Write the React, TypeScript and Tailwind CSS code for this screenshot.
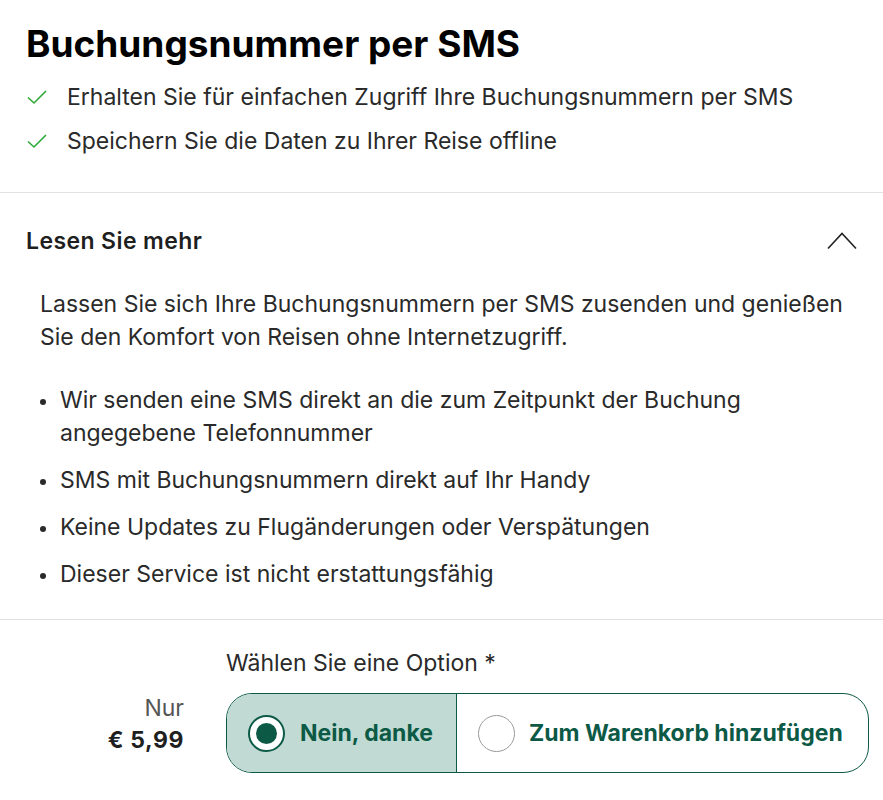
const font = { fontFamily: 'Inter, "Noto Sans", sans-serif' };

function Check() {
  return (
    <svg width="22" height="16" viewBox="0 0 22 16" className="shrink-0">
      <path d="M2 8.5 L8 14 L20 2" fill="none" stroke="#2ea836" strokeWidth="1.6" />
    </svg>
  );
}

function Chevron() {
  return (
    <svg width="30" height="18" viewBox="0 0 30 18" className="shrink-0">
      <path d="M1 16.5 L15 1.5 L29 16.5" fill="none" stroke="#222" strokeWidth="1.6" />
    </svg>
  );
}

function Radio({ checked }: { checked: boolean }) {
  return (
    <span
      className={
        checked
          ? 'flex h-[37px] w-[37px] shrink-0 items-center justify-center rounded-full border-2 border-[#0c5a46] bg-white'
          : 'flex h-[37px] w-[37px] shrink-0 items-center justify-center rounded-full border border-[#9a9a9a] bg-white'
      }
    >
      {checked && <span className="h-[21px] w-[21px] rounded-full bg-[#0c5a46]" />}
    </span>
  );
}

const bullets = [
  'Wir senden eine SMS direkt an die zum Zeitpunkt der Buchung angegebene Telefonnummer',
  'SMS mit Buchungsnummern direkt auf Ihr Handy',
  'Keine Updates zu Flugänderungen oder Verspätungen',
  'Dieser Service ist nicht erstattungsfähig',
];

export default function App() {
  return (
    <div className="h-[800px] w-[883px] overflow-hidden bg-white text-[#1f1f1f]" style={font}>
      <div className="px-[26px] pt-[24px] pb-[36px]">
        <h1 className="text-[37px] font-bold leading-[40px] text-black">Buchungsnummer per SMS</h1>
        <ul className="mt-[18px] flex flex-col gap-[14px]">
          <li className="flex items-center gap-[19px] text-[23px] leading-[30px] text-[#2a2a2a]">
            <Check />
            Erhalten Sie für einfachen Zugriff Ihre Buchungsnummern per SMS
          </li>
          <li className="flex items-center gap-[19px] text-[23px] leading-[30px] text-[#2a2a2a]">
            <Check />
            Speichern Sie die Daten zu Ihrer Reise offline
          </li>
        </ul>
      </div>
      <div className="border-t border-[#e2e2e2]" />
      <div className="flex h-[30px] items-center justify-between px-[26px] mt-[33px] mb-[32px] box-content">
        <span className="text-[23px] font-semibold leading-[30px] tracking-[0.4px] text-[#1f1f1f]">Lesen Sie mehr</span>
        <Chevron />
      </div>
      <div className="px-[40px] pb-[28px] text-[23px] leading-[33px] text-[#2a2a2a]">
        <p>
          Lassen Sie sich Ihre Buchungsnummern per SMS zusenden und genießen Sie den Komfort von Reisen ohne
          Internetzugriff.
        </p>
        <ul className="mt-[30px] flex flex-col gap-[14px]">
          {bullets.map((b) => (
            <li key={b} className="flex gap-[14px] pr-[80px]">
              <span className="mt-[15px] h-[6px] w-[6px] shrink-0 rounded-full bg-[#2a2a2a]" />
              <span>{b}</span>
            </li>
          ))}
        </ul>
      </div>
      <div className="border-t border-[#e2e2e2]" />
      <div className="flex pt-[29px]">
        <div className="flex w-[226px] flex-col items-end pr-[42px] pt-[43px] text-[23px] leading-[32px]">
          <span className="text-[#555]">Nur</span>
          <span className="font-bold tracking-[0.6px] text-[#1f1f1f]">€ 5,99</span>
        </div>
        <div className="flex flex-col">
          <span className="text-[23px] leading-[28px] text-[#2a2a2a]">Wählen Sie eine Option *</span>
          <div className="mt-[16px] flex h-[80px] w-[643px] overflow-hidden rounded-[26px] border border-[#0c5a46]">
            <div className="flex w-[230px] items-center gap-[15px] border-r border-[#0c5a46] bg-[#c1dad3] pl-[21px]">
              <Radio checked />
              <span className="text-[23px] font-bold text-[#0c5a46]">Nein, danke</span>
            </div>
            <div className="flex flex-1 items-center gap-[14px] pl-[21px]">
              <Radio checked={false} />
              <span className="text-[23px] font-bold text-[#0c5a46]">Zum Warenkorb hinzufügen</span>
            </div>
          </div>
        </div>
      </div>
    </div>
  );
}
